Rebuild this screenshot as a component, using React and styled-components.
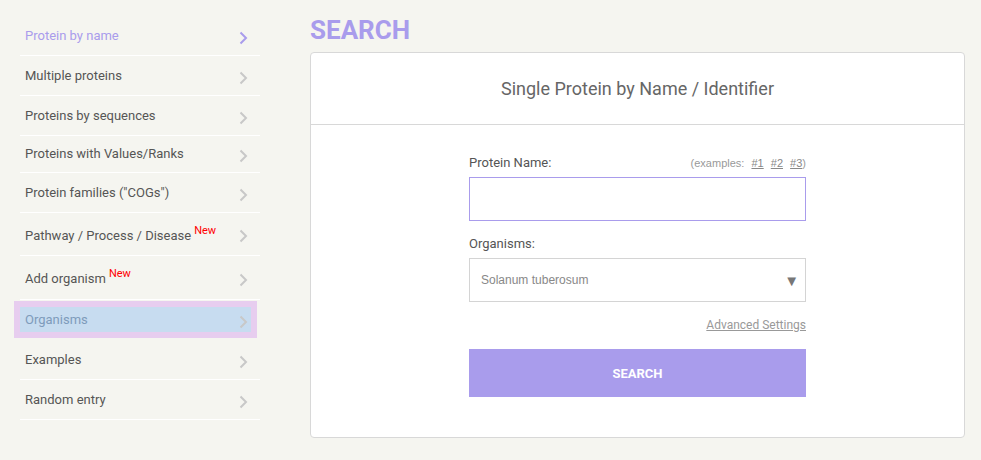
import styled, { createGlobalStyle } from "styled-components"

const GlobalStyle = createGlobalStyle`
    body {
        margin: 0;
        background: #f5f5f0;
        font-family: Roboto, "Liberation Sans", Arial, sans-serif;
    }
`

const StyledPage = styled.div`
    display: flex;
    align-items: flex-start;
    gap: 50px;
    padding: 0 16px 0 20px;
    height: 460px;
    box-sizing: border-box;
`
const StyledSidebar = styled.ul`
    list-style: none;
    margin: 0;
    padding: 16px 0 0 0;
    width: 240px;
    flex-shrink: 0;
`
const StyledNavItem = styled.li`
    display: flex;
    align-items: center;
    justify-content: space-between;
    height: ${p => p.$h}px;
    padding: 0 12px 0 5px;
    border-bottom: 1px solid #ffffff;
    font-size: 13px;
    color: ${p => p.$active ? "#a99cec" : "#555"};
    box-sizing: border-box;
    ${p => p.$focused && `
        background: #c7dcf0;
        color: #7e9bbb;
        outline: 6px solid #e7cdef;
        border-bottom: none;
        margin: 7px 9px 8px 0;
        padding-right: 3px;
        height: 25px;
    `}
`
const StyledNavText = styled.span`
    position: relative;
    top: ${p => p.$shift || 0}px;
`
const StyledNew = styled.sup`
    color: #ff0000;
    font-size: 11px;
    margin-left: 3px;
    position: relative;
    top: -1px;
`
const StyledChevron = styled.svg`
    width: 9px;
    height: 14px;
    margin-top: 4px;
    flex-shrink: 0;
`
const StyledMain = styled.main`
    flex: 1;
    padding-top: 15px;
`
const StyledPageTitle = styled.h1`
    margin: 0 0 7px 0;
    font-size: 26px;
    line-height: 30px;
    font-weight: 700;
    color: #a99cec;
`
const StyledCard = styled.div`
    background: #fff;
    border: 1px solid #d8d8d8;
    border-radius: 4px;
    height: 386px;
    box-sizing: border-box;
`
const StyledCardHeader = styled.div`
    height: 72px;
    border-bottom: 1px solid #d8d8d8;
    display: flex;
    align-items: center;
    justify-content: center;
    font-size: 18px;
    color: #666;
    box-sizing: border-box;
`
const StyledForm = styled.div`
    width: 337px;
    margin: 0 auto;
    padding-top: 30px;
`
const StyledLabelRow = styled.div`
    display: flex;
    justify-content: space-between;
    align-items: baseline;
    font-size: 13px;
    color: #555;
    height: 16px;
    margin-bottom: 6px;
`
const StyledExamples = styled.span`
    font-family: "Liberation Sans", Arial, sans-serif;
    font-size: 11px;
    color: #999;
    a {
        color: #888;
        text-decoration: underline;
        margin-left: 4px;
    }
`
const StyledInput = styled.input`
    display: block;
    width: 100%;
    height: 44px;
    box-sizing: border-box;
    border: 1px solid #a99cec;
    outline: none;
    background: #fff;
    margin-bottom: 15px;
`
const StyledSelect = styled.div`
    display: flex;
    align-items: center;
    justify-content: space-between;
    height: 44px;
    box-sizing: border-box;
    border: 1px solid #d4d4d4;
    padding: 0 6px 0 11px;
    font-family: "Liberation Sans", Arial, sans-serif;
    font-size: 12px;
    color: #888;
`
const StyledArrow = styled.span`
    font-size: 15px;
    color: #777;
    margin-top: 1px;
`
const StyledAdvanced = styled.div`
    text-align: right;
    font-size: 12px;
    color: #999;
    text-decoration: underline;
    margin: 16px 0 17px 0;
    line-height: 14px;
`
const StyledButton = styled.button`
    display: block;
    width: 100%;
    height: 48px;
    border: none;
    background: #a99cec;
    color: #fff;
    font-family: inherit;
    font-size: 13px;
    font-weight: 700;
`

const navItems = [
    { label: "Protein by name", h: 40, active: true },
    { label: "Multiple proteins", h: 40 },
    { label: "Proteins by sequences", h: 40 },
    { label: "Proteins with Values/Ranks", h: 37, shift: -1 },
    { label: "Protein families (\"COGs\")", h: 40 },
    { label: "Pathway / Process / Disease", h: 43, isNew: true },
    { label: "Add organism", h: 44, isNew: true },
    { label: "Organisms", h: 40, focused: true },
    { label: "Examples", h: 40 },
    { label: "Random entry", h: 40 },
]

const Chevron = ({ color }) => (
    <StyledChevron viewBox="0 0 9 14">
        <path d="M1.5 1.5 L7 7 L1.5 12.5" fill="none" stroke={color} strokeWidth="2" />
    </StyledChevron>
)

const App = () => {
    return (
        <>
            <GlobalStyle />
            <StyledPage>
                <StyledSidebar>
                    {navItems.map(item => (
                        <StyledNavItem key={item.label} $h={item.h} $active={item.active} $focused={item.focused}>
                            <StyledNavText $shift={item.shift}>
                                {item.label}
                                {item.isNew && <StyledNew>New</StyledNew>}
                            </StyledNavText>
                            <Chevron color={item.active ? "#a99cec" : "#c8c8c8"} />
                        </StyledNavItem>
                    ))}
                </StyledSidebar>
                <StyledMain>
                    <StyledPageTitle>SEARCH</StyledPageTitle>
                    <StyledCard>
                        <StyledCardHeader>Single Protein by Name / Identifier</StyledCardHeader>
                        <StyledForm>
                            <StyledLabelRow>
                                <span>Protein Name:</span>
                                <StyledExamples>
                                    (examples: <a>#1</a> <a>#2</a> <a>#3</a>)
                                </StyledExamples>
                            </StyledLabelRow>
                            <StyledInput />
                            <StyledLabelRow>
                                <span>Organisms:</span>
                            </StyledLabelRow>
                            <StyledSelect>
                                <span>Solanum tuberosum</span>
                                <StyledArrow>▼</StyledArrow>
                            </StyledSelect>
                            <StyledAdvanced>Advanced Settings</StyledAdvanced>
                            <StyledButton>SEARCH</StyledButton>
                        </StyledForm>
                    </StyledCard>
                </StyledMain>
            </StyledPage>
        </>
    )
}

export default App
